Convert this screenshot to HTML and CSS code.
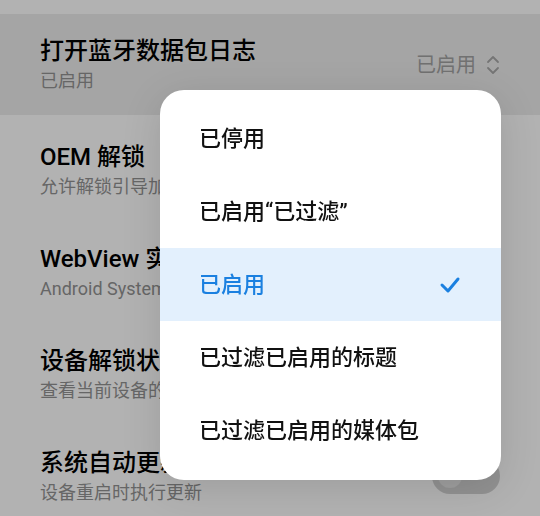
FILE: index.html
```html
<!DOCTYPE html>
<html>
<head>
    <title>开发者选项</title>
    <link rel="stylesheet" href="styles.css">
</head>
<body>
    <div class="top-gap"></div>

    <div class="row pressed">
        <div class="row-text">
            <div class="title">打开蓝牙数据包日志</div>
            <div class="sub">已启用</div>
        </div>
        <div class="value">
            <span>已启用</span>
            <svg class="updown" width="14" height="22" viewBox="0 0 14 22">
                <path d="M2 8 L7 3 L12 8" />
                <path d="M2 14 L7 19 L12 14" />
            </svg>
        </div>
    </div>

    <div class="row">
        <div class="row-text">
            <div class="title">OEM 解锁</div>
            <div class="sub">允许解锁引导加载程序</div>
        </div>
    </div>

    <div class="row">
        <div class="row-text">
            <div class="title">WebView 实现</div>
            <div class="sub">Android System WebView</div>
        </div>
    </div>

    <div class="row">
        <div class="row-text">
            <div class="title">设备解锁状态</div>
            <div class="sub">查看当前设备的解锁状态</div>
        </div>
    </div>

    <div class="row">
        <div class="row-text">
            <div class="title">系统自动更新</div>
            <div class="sub">设备重启时执行更新</div>
        </div>
        <div class="switch"><span class="knob"></span></div>
    </div>

    <!-- 遮罩 + 弹出菜单 -->
    <div class="dim"></div>
    <div class="menu">
        <div class="item"><span>已停用</span></div>
        <div class="item"><span>已启用“已过滤”</span></div>
        <div class="item selected">
            <span>已启用</span>
            <svg class="check" width="22" height="18" viewBox="0 0 22 18">
                <path d="M3 9 L9 15 L19 3" />
            </svg>
        </div>
        <div class="item"><span>已过滤已启用的标题</span></div>
        <div class="item"><span>已过滤已启用的媒体包</span></div>
    </div>
</body>
</html>
```

FILE: styles.css
```css
body {
    margin: 0;
    background-color: #ffffff;
    font-family: Roboto, "Noto Sans CJK SC", sans-serif;
    overflow: hidden;
}
.top-gap {
    height: 14px;
}
.row {
    display: flex;
    align-items: center;
    height: 102px;
    padding: 8px 40px 0;
    box-sizing: border-box;
}
.row.pressed {
    height: 101px;
    padding-top: 0;
    background-color: #ededed;
}
.row-text {
    flex: 1;
    white-space: nowrap;
}
.title {
    font-size: 24px;
    line-height: 32px;
    font-weight: 500;
    color: #000000;
}
.sub {
    font-size: 18px;
    line-height: 26px;
    color: #939393;
    margin-top: 1px;
}
.value {
    display: flex;
    align-items: center;
    gap: 10px;
    font-size: 20px;
    line-height: 26px;
    color: #a3a3a3;
}
.updown path {
    fill: none;
    stroke: #a8a8a8;
    stroke-width: 1.8;
    stroke-linecap: round;
    stroke-linejoin: round;
}
.switch {
    flex: none;
    width: 68px;
    height: 36px;
    border-radius: 18px;
    background-color: #d2d2d2;
    position: relative;
}
.knob {
    position: absolute;
    left: 6px;
    top: 6px;
    width: 24px;
    height: 24px;
    border-radius: 50%;
    background-color: #e4e4e4;
}
.dim {
    position: fixed;
    inset: 0;
    background-color: rgba(0, 0, 0, 0.3);
}
.menu {
    position: absolute;
    left: 160px;
    top: 90px;
    width: 341px;
    padding: 12px 0 13px;
    background-color: #ffffff;
    border-radius: 24px;
    box-shadow: 0 8px 40px rgba(0, 0, 0, 0.12);
}
.item {
    display: flex;
    align-items: center;
    justify-content: space-between;
    height: 73px;
    padding: 0 40px 0 39px;
    font-size: 22px;
    line-height: 30px;
    font-weight: 500;
    color: #111111;
}
.item.selected {
    background-color: #e3f0fd;
    color: #1b80e0;
}
.check path {
    fill: none;
    stroke: #1b80e0;
    stroke-width: 3;
    stroke-linecap: round;
    stroke-linejoin: round;
}
```
